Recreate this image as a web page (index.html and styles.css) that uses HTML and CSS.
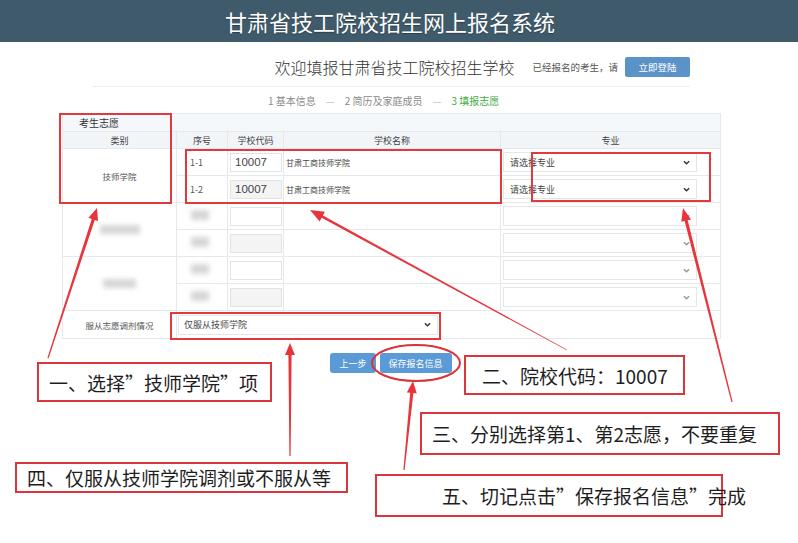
FILE: index.html
```html
<!DOCTYPE html>
<html lang="zh-CN">
<head>
<meta charset="utf-8">
<title>甘肃省技工院校招生网上报名系统</title>
<link rel="stylesheet" href="styles.css">
</head>
<body>
<header class="topbar"><h1>甘肃省技工院校招生网上报名系统</h1></header>

<div class="welcome">
  <span class="welcome-title">欢迎填报甘肃省技工院校招生学校</span>
  <span class="welcome-note">已经报名的考生，请</span>
  <a class="login-btn">立即登陆</a>
</div>

<div class="steps">
  <span>1 基本信息</span><span class="sep">—</span><span>2 简历及家庭成员</span><span class="sep">—</span><span class="current">3 填报志愿</span>
</div>

<main class="form-wrap">
  <table class="wish-table">
    <colgroup><col class="c-type"><col class="c-no"><col class="c-code"><col class="c-name"><col class="c-major"></colgroup>
    <tr class="caption-row"><td colspan="5">考生志愿</td></tr>
    <tr class="head-row"><th>类别</th><th>序号</th><th>学校代码</th><th>学校名称</th><th>专业</th></tr>
    <tr>
      <td rowspan="2" class="type">技师学院</td>
      <td class="no">1-1</td>
      <td class="code"><div class="input">10007</div></td>
      <td class="name">甘肃工商技师学院</td>
      <td class="major"><div class="select"><span>请选择专业</span><svg class="chev" viewBox="0 0 8 5"><polyline points="1,1 4,4 7,1"/></svg></div></td>
    </tr>
    <tr>
      <td class="no">1-2</td>
      <td class="code"><div class="input filled">10007</div></td>
      <td class="name">甘肃工商技师学院</td>
      <td class="major"><div class="select"><span>请选择专业</span><svg class="chev" viewBox="0 0 8 5"><polyline points="1,1 4,4 7,1"/></svg></div></td>
    </tr>
    <tr>
      <td rowspan="2" class="type"><span class="blur blur-type"></span></td>
      <td class="no"><span class="blur blur-no"></span></td>
      <td class="code"><div class="input"></div></td>
      <td class="name"></td>
      <td class="major"><div class="select"><span></span><svg class="chev faint" viewBox="0 0 8 5"><polyline points="1,1 4,4 7,1"/></svg></div></td>
    </tr>
    <tr>
      <td class="no"><span class="blur blur-no"></span></td>
      <td class="code"><div class="input filled"></div></td>
      <td class="name"></td>
      <td class="major"><div class="select"><span></span><svg class="chev faint" viewBox="0 0 8 5"><polyline points="1,1 4,4 7,1"/></svg></div></td>
    </tr>
    <tr>
      <td rowspan="2" class="type"><span class="blur blur-type short"></span></td>
      <td class="no"><span class="blur blur-no"></span></td>
      <td class="code"><div class="input"></div></td>
      <td class="name"></td>
      <td class="major"><div class="select"><span></span><svg class="chev faint" viewBox="0 0 8 5"><polyline points="1,1 4,4 7,1"/></svg></div></td>
    </tr>
    <tr>
      <td class="no"><span class="blur blur-no"></span></td>
      <td class="code"><div class="input filled"></div></td>
      <td class="name"></td>
      <td class="major"><div class="select"><span></span><svg class="chev faint" viewBox="0 0 8 5"><polyline points="1,1 4,4 7,1"/></svg></div></td>
    </tr>
    <tr class="adjust-row">
      <td class="type">服从志愿调剂情况</td>
      <td colspan="4" class="adjust"><div class="select wide"><span>仅服从技师学院</span><svg class="chev" viewBox="0 0 8 5"><polyline points="1,1 4,4 7,1"/></svg></div></td>
    </tr>
  </table>

  <div class="actions">
    <a class="btn">上一步</a>
    <a class="btn">保存报名信息</a>
  </div>
</main>

<!-- tutorial annotations drawn over the page -->
<div class="hl hl-type"></div>
<div class="hl hl-code"></div>
<div class="hl hl-major"></div>
<div class="hl hl-adjust"></div>

<svg class="arrows" viewBox="0 0 798 543" width="798" height="543">
  <ellipse cx="416" cy="363" rx="44" ry="18" class="ring"/>
  <polygon points="47.43,357.81 91.75,218.91 88.52,217.86 97,208 98.02,220.96 94.79,219.91 48.57,358.19"/>
  <polygon points="566.81,350.35 321.67,217.84 319.66,221.53 310,210 324.92,211.87 322.91,215.56 567.19,349.65"/>
  <polygon points="731.42,402.15 684.63,220.99 681.33,221.82 683,208 691.03,219.38 687.73,220.21 732.58,401.85"/>
  <polygon points="289.4,456 288.4,355 285,355 290,343 295,355 291.6,355 290.6,456"/>
  <polygon points="403.4,469.94 410.20,392.78 406.82,392.44 413,381 416.77,393.44 413.38,393.10 404.6,470.06"/>
</svg>

<div class="note note-1">一、选择”技师学院”项</div>
<div class="note note-2">二、院校代码：10007</div>
<div class="note note-3">三、分别选择第1、第2志愿，不要重复</div>
<div class="note note-4">四、仅服从技师学院调剂或不服从等</div>
<div class="note note-5">五、切记点击”保存报名信息”完成</div>
</body>
</html>
```

FILE: styles.css
```css
* { box-sizing: border-box; }

body {
  margin: 0;
  width: 798px;
  height: 543px;
  position: relative;
  overflow: hidden;
  background: #fff;
  font-family: "Noto Sans CJK SC", "Noto Sans", sans-serif;
  color: #555;
}

/* header */
.topbar {
  height: 42px;
  background: #3f5a6b;
  display: flex;
  align-items: center;
  justify-content: center;
  padding-right: 18px;
}
.topbar h1 {
  margin: 0;
  font-size: 22px;
  font-weight: 400;
  color: #fff;
  line-height: 1;
  text-shadow: 0 1px 1px rgba(0,0,0,.3);
}

/* welcome line */
.welcome {
  margin: 6px 0 0 92px;
  width: 598px;
  height: 39px;
  display: flex;
  align-items: center;
  justify-content: flex-end;
  border-bottom: 1px solid #eeeeee;
  padding-bottom: 1px;
}
.welcome-title {
  font-size: 16px;
  font-weight: 300;
  color: #333;
  margin-right: 18px;
}
.welcome-note {
  font-size: 9.5px;
  color: #555;
  margin-right: 7px;
}
.login-btn {
  width: 65px;
  height: 20px;
  background: #5b93c9;
  border-radius: 2px;
  color: #fff;
  font-size: 9.5px;
  display: flex;
  align-items: center;
  justify-content: center;
}

/* steps */
.steps {
  height: 26px;
  display: flex;
  align-items: center;
  padding-left: 268px;
  font-size: 10px;
  color: #8a8a8a;
}
.steps .sep { margin: 0 10px; color: #c8c8c8; }
.steps .current { color: #3faa3f; }

/* form table */
.form-wrap { margin-left: 62px; width: 658px; }

.wish-table {
  width: 658px;
  border-collapse: collapse;
  table-layout: fixed;
  font-size: 9px;
  color: #555;
}
.c-type { width: 114px; }
.c-no { width: 51px; }
.c-code { width: 56px; }
.c-name { width: 217px; }
.c-major { width: 220px; }

.wish-table td, .wish-table th {
  border: 1px solid #e6e9ec;
  padding: 0;
  height: 27px;
  vertical-align: middle;
}
.caption-row td {
  height: 18px;
  background: #f5f8fa;
  padding-left: 16px;
  font-size: 10px;
  color: #333;
}
.head-row th {
  height: 17px;
  background: #f1f5f8;
  font-weight: normal;
  color: #444;
  font-size: 9px;
}
.wish-table .type { text-align: center; font-size: 8.5px; color: #555; }
.wish-table .no { padding-left: 13px; font-size: 9px; }
.wish-table .name { padding-left: 2px; font-size: 8px; color: #444; }

.input {
  width: 52px;
  height: 19px;
  margin-left: 2px;
  border: 1px solid #e3e3e3;
  background: #fff;
  font-family: "Liberation Sans", Arial, sans-serif;
  font-size: 11.5px;
  color: #444;
  line-height: 17px;
  padding-left: 4px;
}
.input.filled { background: #f4f4f4; }

.select {
  width: 194px;
  height: 20px;
  margin-left: 2px;
  border: 1px solid #e6e6e6;
  background: #fff;
  display: flex;
  align-items: center;
  justify-content: space-between;
  padding: 0 6px 0 6px;
  font-size: 9px;
  color: #444;
}
.select.wide { width: 260px; margin-left: 1px; padding-left: 5px; }
.chev {
  width: 7px;
  height: 5px;
  fill: none;
  stroke: #333;
  stroke-width: 1.6;
}
.chev.faint { stroke: #999; }

.blur {
  display: inline-block;
  background: #d6d6d6;
  filter: blur(2.5px);
}
.blur-no { width: 18px; height: 10px; margin-left: 1px; }
.blur-type { width: 40px; height: 9px; }
.blur-type.short { width: 33px; }

.adjust-row td { height: 28px; }
.adjust { padding-left: 0; }

/* buttons */
.actions {
  margin-top: 14px;
  display: flex;
  justify-content: center;
  gap: 4px;
}
.btn {
  height: 20px;
  padding: 0 9px;
  background: #5a9ad6;
  border-radius: 3px;
  color: #fff;
  font-size: 9px;
  display: flex;
  align-items: center;
}

/* annotations overlay */
.hl {
  position: absolute;
  border: 2px solid #e0393e;
}
.hl-type { left: 59px; top: 113px; width: 113px; height: 91px; }
.hl-code { left: 185px; top: 149px; width: 317px; height: 55px; }
.hl-major { left: 531px; top: 152px; width: 180px; height: 50px; }
.hl-adjust { left: 170px; top: 312px; width: 271px; height: 28px; }

.arrows {
  position: absolute;
  left: 0;
  top: 0;
}
.arrows polygon { fill: #e8353b; }
.arrows .ring { fill: none; stroke: #d9333b; stroke-width: 2; }

.note {
  position: absolute;
  border: 2px solid #d9363e;
  background: #fff;
  color: #1e1e1e;
  font-size: 19px;
  white-space: nowrap;
  display: flex;
  align-items: center;
}
.note-1 { left: 37px; top: 362px; width: 235px; height: 40px; padding-left: 10px; }
.note-2 { left: 464px; top: 355px; width: 221px; height: 40px; padding-left: 16px; }
.note-3 { left: 420px; top: 412px; width: 360px; height: 43px; padding-left: 10px; }
.note-4 { left: 15px; top: 462px; width: 333px; height: 31px; padding-left: 10px; }
.note-5 { left: 375px; top: 474px; width: 348px; height: 43px; padding-left: 65px; background: transparent; }
```
